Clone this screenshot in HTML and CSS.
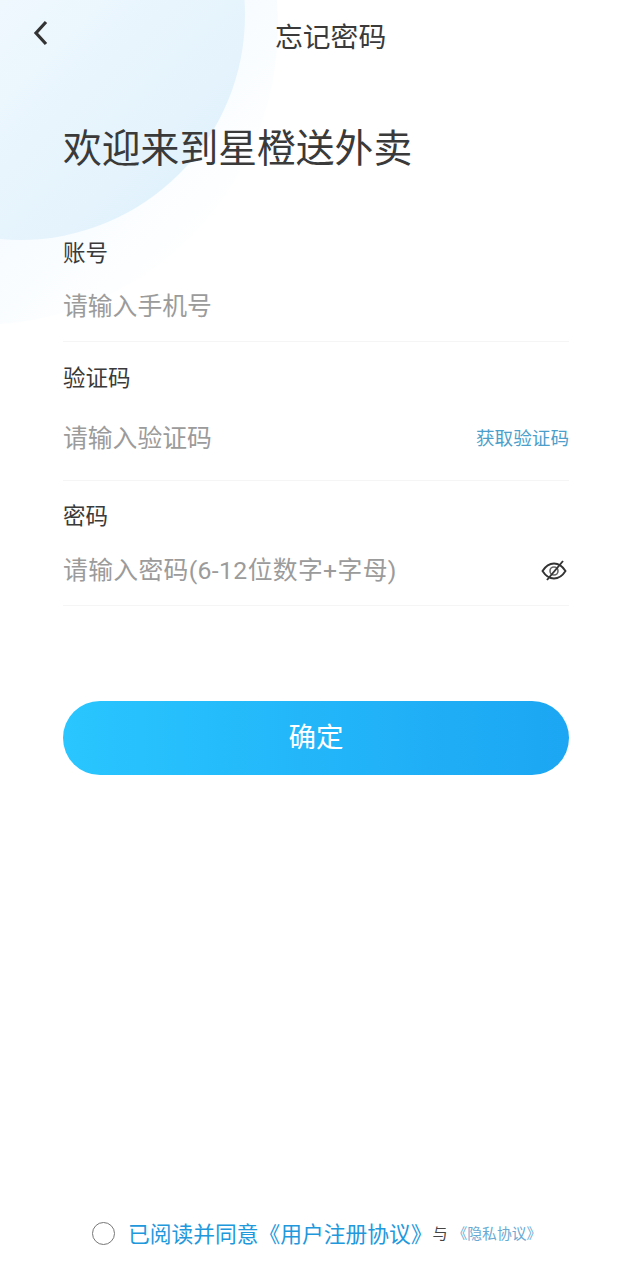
FILE: index.html
```html
<!DOCTYPE html>
<html lang="zh-CN">
<head>
    <meta charset="UTF-8">
    <title>忘记密码</title>
    <link rel="stylesheet" href="styles.css">
</head>
<body>
    <div class="page">
        <div class="blob blob-outer"></div>
        <div class="blob blob-inner"></div>

        <div class="header">
            <svg class="back" width="16" height="26" viewBox="0 0 16 26">
                <path d="M13 2 L3 13 L13 24" fill="none" stroke="#333" stroke-width="3.2"/>
            </svg>
            <span class="header-title">忘记密码</span>
        </div>

        <h1 class="welcome">欢迎来到星橙送外卖</h1>

        <div class="form">
            <label class="field-label label-account">账号</label>
            <div class="field field-account">
                <input class="field-input" type="text" placeholder="请输入手机号">
            </div>

            <label class="field-label label-code">验证码</label>
            <div class="field field-code">
                <input class="field-input" type="text" placeholder="请输入验证码">
                <span class="get-code">获取验证码</span>
            </div>

            <label class="field-label label-pwd">密码</label>
            <div class="field field-pwd">
                <input class="field-input input-pwd" type="text" placeholder="请输入密码(6-12位数字+字母)">
                <svg class="eye" width="26" height="24" viewBox="0 0 26 24">
                    <path d="M1.5 12 C5 6.5 9 4.5 13 4.5 C17 4.5 21 6.5 24.5 12 C21 17.5 17 19.5 13 19.5 C9 19.5 5 17.5 1.5 12 Z" fill="none" stroke="#333" stroke-width="1.9"/>
                    <circle cx="13" cy="12" r="4" fill="none" stroke="#666" stroke-width="1.6"/>
                    <path d="M6 21 L22 2" fill="none" stroke="#333" stroke-width="1.9"/>
                </svg>
            </div>

            <button class="submit">确定</button>
        </div>

        <div class="agree">
            <span class="radio"></span>
            <span class="agree-main">已阅读并同意《用户注册协议》</span>
            <span class="agree-and">与</span>
            <span class="agree-link">《隐私协议》</span>
        </div>
    </div>
</body>
</html>
```

FILE: styles.css
```css
* { box-sizing: border-box; }
html, body { margin: 0; padding: 0; }
body { background: #fff; font-family: Roboto, "Noto Sans CJK SC", sans-serif; color: #3a3a3a; }

.page { position: relative; width: 630px; height: 1280px; overflow: hidden; display: flex; flex-direction: column; }

/* decorative circles in the corner */
.blob { position: absolute; border-radius: 50%; }
.blob-outer { left: -322px; top: -275px; width: 600px; height: 600px; background: linear-gradient(135deg, #f1f9ff 50%, #f8fcff 72%, #fff 88%); }
.blob-inner { left: -205px; top: -210px; width: 450px; height: 450px; background: linear-gradient(135deg, #f1f9fe 40%, #e2f2fc 85%); }

.header { position: relative; height: 74px; display: flex; align-items: center; }
.back { margin: -8px 0 0 33px; }
.header-title { margin-left: 226px; padding-top: 1px; font-size: 27.8px; line-height: 74px; }

.welcome { position: relative; margin: 40px 0 0 63px; font-size: 38.8px; line-height: 70px; font-weight: 400; }

.form { position: relative; margin: 0 61px 0 63px; display: flex; flex-direction: column; }
.field-label { font-size: 22.5px; line-height: 32px; }
.label-account { margin-top: 53px; }
.label-code { margin-top: 20px; }
.label-pwd { margin-top: 19px; }

.field { display: flex; align-items: center; justify-content: space-between; border-bottom: 1px solid #f5f5f5; }
.field-account { height: 73px; padding-top: 2px; }
.field-code { height: 87px; padding-top: 2px; }
.field-pwd { height: 74px; padding-top: 4px; }

.field-input { flex: 1; min-width: 0; padding: 0; border: none; outline: none; background: transparent; font-family: inherit; font-size: 24.8px; color: #333; }
.field-input::placeholder { color: #9b9b9b; opacity: 1; }
.input-pwd { letter-spacing: 0.35px; }

.get-code { margin-bottom: 4px; font-size: 18.6px; color: #4c9fcb; }
.eye { margin-right: 2px; }

.submit { margin-top: 95px; height: 74px; padding-bottom: 8px; border: none; border-radius: 37px; background: linear-gradient(90deg, #29c6ff, #1ca6f3); color: #fff; font-family: inherit; font-size: 27.5px; }

.agree { position: absolute; left: 92px; top: 1216px; display: flex; align-items: center; height: 32px; }
.radio { width: 23px; height: 23px; margin: 2px 13px 0 0; border: 1.5px solid #777; border-radius: 50%; }
.agree-main { font-size: 21.75px; color: #2298dc; }
.agree-and { margin-left: 0; font-size: 15px; color: #444; }
.agree-link { margin-left: 5px; font-size: 14.8px; color: #6aa9d2; }
```
